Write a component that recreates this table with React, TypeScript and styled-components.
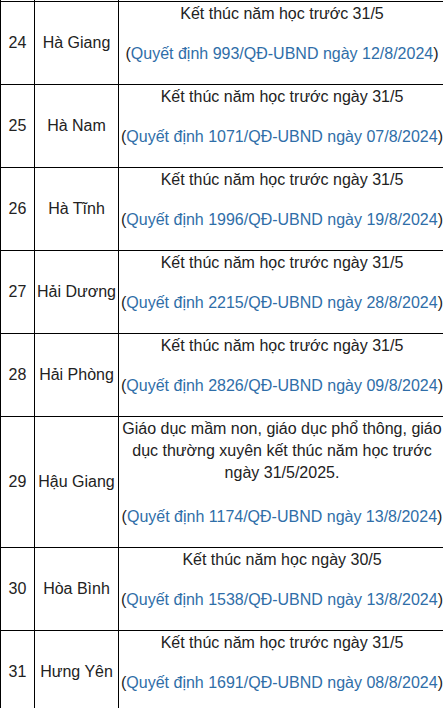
import styled, { createGlobalStyle } from 'styled-components';

const GlobalStyle = createGlobalStyle`
    html, body {
        margin: 0;
        padding: 0;
        background: #fff;
        overflow: hidden;
    }
    body {
        font-family: "Liberation Sans", Arial, sans-serif;
        color: #222;
    }
`

const Table = styled.table`
    width: 446px;
    margin-top: -82px;
    border-collapse: collapse;
    table-layout: fixed;
    font-size: 16px;
    line-height: 22px;
`

const Cell = styled.td`
    border: 1px solid #000;
    padding: 1px 0;
    text-align: center;
    vertical-align: middle;
`

const Para = styled.p<{ $gap?: number }>`
    margin: 0 0 ${p => p.$gap ?? 18}px;
`

const Decision = styled.span`
    color: #2f6ea8;
`

type Row = {
    no: number;
    name: string;
    text: string;
    decision: string;
    gap?: number;
}

const rows: Row[] = [
    { no: 23, name: 'Gia Lai', text: 'Kết thúc năm học trước ngày 31/5', decision: 'Quyết định 2068/QĐ-UBND ngày 12/8/2024' },
    { no: 24, name: 'Hà Giang', text: 'Kết thúc năm học trước 31/5', decision: 'Quyết định 993/QĐ-UBND ngày 12/8/2024' },
    { no: 25, name: 'Hà Nam', text: 'Kết thúc năm học trước ngày 31/5', decision: 'Quyết định 1071/QĐ-UBND ngày 07/8/2024' },
    { no: 26, name: 'Hà Tĩnh', text: 'Kết thúc năm học trước ngày 31/5', decision: 'Quyết định 1996/QĐ-UBND ngày 19/8/2024' },
    { no: 27, name: 'Hải Dương', text: 'Kết thúc năm học trước ngày 31/5', decision: 'Quyết định 2215/QĐ-UBND ngày 28/8/2024' },
    { no: 28, name: 'Hải Phòng', text: 'Kết thúc năm học trước ngày 31/5', decision: 'Quyết định 2826/QĐ-UBND ngày 09/8/2024' },
    {
        no: 29,
        name: 'Hậu Giang',
        text: 'Giáo dục mầm non, giáo dục phổ thông, giáo dục thường xuyên kết thúc năm học trước ngày 31/5/2025.',
        decision: 'Quyết định 1174/QĐ-UBND ngày 13/8/2024',
        gap: 22,
    },
    { no: 30, name: 'Hòa Bình', text: 'Kết thúc năm học ngày 30/5', decision: 'Quyết định 1538/QĐ-UBND ngày 13/8/2024' },
    { no: 31, name: 'Hưng Yên', text: 'Kết thúc năm học trước ngày 31/5', decision: 'Quyết định 1691/QĐ-UBND ngày 08/8/2024' },
]

export default function App() {
    return (
        <>
            <GlobalStyle />
            <Table>
                <colgroup>
                    <col style={{ width: 34 }} />
                    <col style={{ width: 84 }} />
                    <col />
                </colgroup>
                <tbody>
                    {rows.map(r => (
                        <tr key={r.no}>
                            <Cell>{r.no}</Cell>
                            <Cell>{r.name}</Cell>
                            <Cell>
                                <Para $gap={r.gap}>{r.text}</Para>
                                <Para>
                                    (<Decision>{r.decision}</Decision>)
                                </Para>
                            </Cell>
                        </tr>
                    ))}
                </tbody>
            </Table>
        </>
    )
}
